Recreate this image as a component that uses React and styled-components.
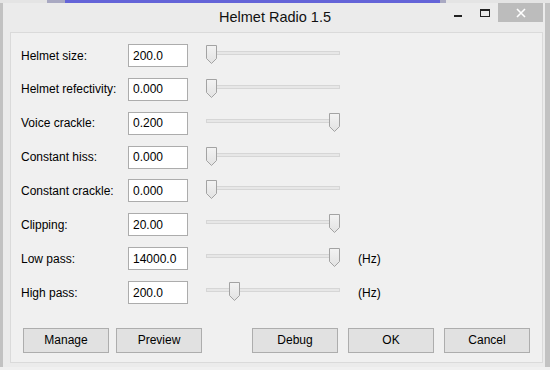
import React from 'react';
import styled, { createGlobalStyle } from 'styled-components';

const Global = createGlobalStyle`
  html, body { margin: 0; padding: 0; }
  body { font-family: "Liberation Sans", Arial, sans-serif; }
`;

const Desktop = styled.div`
  width: 550px;
  height: 370px;
  box-sizing: border-box;
  padding: 3px 5px 3px 3px;
  background:
    linear-gradient(to right, #e4e4e4 0 47px, #a9a9c2 47px 65px, #6464d8 65px 440px, #a9a9c2 440px 446px, #e4e4e4 446px) top left / 100% 3px no-repeat,
    linear-gradient(to bottom, #f0f0f0, #f0f0f0) bottom left / 100% 3px no-repeat,
    #c2c2c2;
  overflow: hidden;
`;

const Window = styled.div`
  width: 542px;
  height: 364px;
  background: #ebebeb;
  display: flex;
  flex-direction: column;
`;

const TitleBar = styled.div`
  height: 29px;
  display: grid;
  grid-template-columns: 1fr auto 1fr;
  align-items: start;
`;

const Title = styled.div`
  grid-column: 2;
  font-size: 14.5px;
  line-height: 29px;
  color: #111;
  padding-left: 2px;
`;

const Controls = styled.div`
  grid-column: 3;
  justify-self: end;
  display: flex;
  margin-right: 2px;
`;

const CtrlButton = styled.div`
  width: ${p => p.$w}px;
  height: 19px;
  display: flex;
  align-items: center;
  justify-content: center;
  background: ${p => (p.$close ? '#bcbcbc' : 'transparent')};
`;

const Panel = styled.div`
  flex: 1;
  margin: 0 2px 4px 7px;
  border: 1px solid #dadada;
  background: #f0f0f0;
  padding: 11px 12px 9px 10px;
  display: flex;
  flex-direction: column;
`;

const Form = styled.div`
  display: grid;
  grid-template-columns: 107px 60px 152px auto;
  row-gap: 10.86px;
  grid-auto-rows: 23px;
  align-items: center;
`;

const Label = styled.div`
  font-size: 12px;
  color: #000;
  white-space: nowrap;
`;

const Field = styled.input`
  width: 60px;
  height: 23px;
  box-sizing: border-box;
  margin: 0;
  border: 1px solid #acacac;
  background: #fff;
  padding: 0 0 0 4px;
  font-family: "Liberation Sans", Arial, sans-serif;
  font-size: 12px;
  color: #000;
  outline: none;
`;

const Slider = styled.div`
  position: relative;
  height: 23px;
  width: 134px;
  margin-left: 18px;
`;

const Track = styled.div`
  position: absolute;
  left: 0;
  right: 0;
  top: 7px;
  height: 4px;
  box-sizing: border-box;
  border: 1px solid #d6d6d6;
  background: #e7e7e7;
`;

const Thumb = styled.svg`
  position: absolute;
  top: 1px;
  width: 11px;
  height: 19px;
`;

const Unit = styled.div`
  font-size: 12px;
  color: #000;
  padding-left: 18px;
`;

const ButtonBar = styled.div`
  margin-top: auto;
  margin-left: 2px;
  display: flex;
  justify-content: space-between;
`;

const Group = styled.div`
  display: flex;
  gap: ${p => p.$gap}px;
`;

const Button = styled.button`
  width: 86px;
  height: 25px;
  margin: 0;
  padding: 0 0 2px;
  border: 1px solid #adadad;
  background: #e1e1e1;
  font-family: "Liberation Sans", Arial, sans-serif;
  font-size: 12px;
  color: #000;
`;

const rows = [
  { label: 'Helmet size:', value: '200.0', pos: 0 },
  { label: 'Helmet refectivity:', value: '0.000', pos: 0 },
  { label: 'Voice crackle:', value: '0.200', pos: 1 },
  { label: 'Constant hiss:', value: '0.000', pos: 0 },
  { label: 'Constant crackle:', value: '0.000', pos: 0 },
  { label: 'Clipping:', value: '20.00', pos: 1 },
  { label: 'Low pass:', value: '14000.0', pos: 1, unit: '(Hz)' },
  { label: 'High pass:', value: '200.0', pos: 0.187, unit: '(Hz)' },
];

function SliderControl({ pos }) {
  return (
    <Slider>
      <Track />
      <Thumb viewBox="0 0 11 19" style={{ left: Math.round(pos * 123) }}>
        <defs>
          <linearGradient id="tg" x1="0" y1="0" x2="0" y2="1">
            <stop offset="0" stopColor="#f3f3f3" />
            <stop offset="1" stopColor="#e2e2e2" />
          </linearGradient>
        </defs>
        <path d="M0.5 0.5 H10.5 V13.5 L5.5 18.5 L0.5 13.5 Z" fill="url(#tg)" stroke="#a3a3a3" />
      </Thumb>
    </Slider>
  );
}

export default function App() {
  return (
    <>
      <Global />
      <Desktop>
        <Window>
          <TitleBar>
            <Title>Helmet Radio 1.5</Title>
            <Controls>
              <CtrlButton $w={26}>
                <svg width="10" height="19" viewBox="0 0 10 19">
                  <rect x="1" y="12" width="8" height="2" fill="#222" />
                </svg>
              </CtrlButton>
              <CtrlButton $w={27}>
                <svg width="12" height="19" viewBox="0 0 12 19">
                  <rect x="1.5" y="6.5" width="9" height="7" fill="none" stroke="#222" />
                  <rect x="1" y="6" width="10" height="2" fill="#222" />
                </svg>
              </CtrlButton>
              <CtrlButton $w={45} $close>
                <svg width="10" height="10" viewBox="0 0 10 10">
                  <path d="M1 1 L9 9 M9 1 L1 9" stroke="#fff" strokeWidth="1.6" />
                </svg>
              </CtrlButton>
            </Controls>
          </TitleBar>
          <Panel>
            <Form>
              {rows.map(r => (
                <React.Fragment key={r.label}>
                  <Label>{r.label}</Label>
                  <Field readOnly value={r.value} />
                  <SliderControl pos={r.pos} />
                  <Unit>{r.unit || ''}</Unit>
                </React.Fragment>
              ))}
            </Form>
            <ButtonBar>
              <Group $gap={7}>
                <Button>Manage</Button>
                <Button>Preview</Button>
              </Group>
              <Group $gap={10}>
                <Button>Debug</Button>
                <Button>OK</Button>
                <Button>Cancel</Button>
              </Group>
            </ButtonBar>
          </Panel>
        </Window>
      </Desktop>
    </>
  );
}
